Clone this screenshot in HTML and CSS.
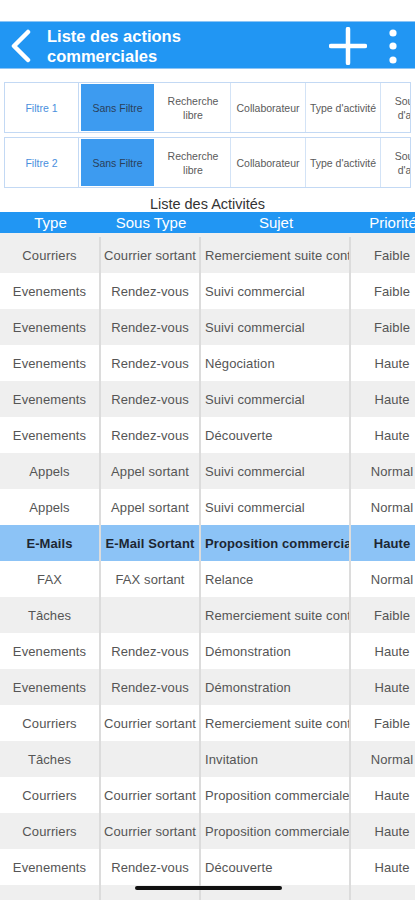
FILE: index.html
```html
<!DOCTYPE html>
<html lang="fr">
<head>
<meta charset="utf-8">
<link rel="stylesheet" href="styles.css">
</head>
<body>
<div class="status"></div>
<header class="appbar">
  <svg class="back" width="26" height="34" viewBox="0 0 26 34"><path d="M20 3 L6 17 L20 31" fill="none" stroke="#fff" stroke-width="4.5" stroke-linecap="round" stroke-linejoin="round"/></svg>
  <div class="title">Liste des actions<br>commerciales</div>
  <svg class="plus" width="38" height="38" viewBox="0 0 38 38"><path d="M19 2 V36 M2 19 H36" stroke="#fff" stroke-width="4.5" stroke-linecap="round"/></svg>
  <svg class="more" width="12" height="38" viewBox="0 0 12 38"><circle cx="6" cy="6" r="3.6" fill="#fff"/><circle cx="6" cy="19" r="3.6" fill="#fff"/><circle cx="6" cy="33" r="3.6" fill="#fff"/></svg>
</header>

<section class="filters">
  <div class="frow">
    <div class="fcell first">Filtre 1</div>
    <div class="fcell sel">Sans Filtre</div>
    <div class="fcell">Recherche<br>libre</div>
    <div class="fcell">Collaborateur</div>
    <div class="fcell">Type d'activité</div>
    <div class="fcell">Sous type<br>d'activité</div>
  </div>
  <div class="frow">
    <div class="fcell first">Filtre 2</div>
    <div class="fcell sel">Sans Filtre</div>
    <div class="fcell">Recherche<br>libre</div>
    <div class="fcell">Collaborateur</div>
    <div class="fcell">Type d'activité</div>
    <div class="fcell">Sous type<br>d'activité</div>
  </div>
</section>

<div class="ltitle">Liste des Activités</div>

<div class="table">
  <div class="row head"><div>Type</div><div>Sous Type</div><div>Sujet</div><div>Priorité</div></div>
  <div class="row g firstrow"><div>Courriers</div><div>Courrier sortant</div><div class="l">Remerciement suite contact</div><div>Faible</div></div>
  <div class="row"><div>Evenements</div><div>Rendez-vous</div><div class="l">Suivi commercial</div><div>Faible</div></div>
  <div class="row g"><div>Evenements</div><div>Rendez-vous</div><div class="l">Suivi commercial</div><div>Faible</div></div>
  <div class="row"><div>Evenements</div><div>Rendez-vous</div><div class="l">Négociation</div><div>Haute</div></div>
  <div class="row g"><div>Evenements</div><div>Rendez-vous</div><div class="l">Suivi commercial</div><div>Haute</div></div>
  <div class="row"><div>Evenements</div><div>Rendez-vous</div><div class="l">Découverte</div><div>Haute</div></div>
  <div class="row g"><div>Appels</div><div>Appel sortant</div><div class="l">Suivi commercial</div><div>Normal</div></div>
  <div class="row"><div>Appels</div><div>Appel sortant</div><div class="l">Suivi commercial</div><div>Normal</div></div>
  <div class="row hl"><div>E-Mails</div><div>E-Mail Sortant</div><div class="l">Proposition commerciale</div><div>Haute</div></div>
  <div class="row"><div>FAX</div><div>FAX sortant</div><div class="l">Relance</div><div>Normal</div></div>
  <div class="row g"><div>Tâches</div><div></div><div class="l">Remerciement suite contact</div><div>Faible</div></div>
  <div class="row"><div>Evenements</div><div>Rendez-vous</div><div class="l">Démonstration</div><div>Haute</div></div>
  <div class="row g"><div>Evenements</div><div>Rendez-vous</div><div class="l">Démonstration</div><div>Haute</div></div>
  <div class="row"><div>Courriers</div><div>Courrier sortant</div><div class="l">Remerciement suite contact</div><div>Faible</div></div>
  <div class="row g"><div>Tâches</div><div></div><div class="l">Invitation</div><div>Normal</div></div>
  <div class="row"><div>Courriers</div><div>Courrier sortant</div><div class="l">Proposition commerciale</div><div>Haute</div></div>
  <div class="row g"><div>Courriers</div><div>Courrier sortant</div><div class="l">Proposition commerciale</div><div>Haute</div></div>
  <div class="row"><div>Evenements</div><div>Rendez-vous</div><div class="l">Découverte</div><div>Haute</div></div>
  <div class="row g"><div></div><div></div><div class="l"></div><div></div></div>
</div>

<div class="homebar"></div>
</body>
</html>
```

FILE: styles.css
```css
html, body {
  margin: 0;
  padding: 0;
  width: 415px;
  height: 900px;
  overflow: hidden;
  background: #fff;
  font-family: "Liberation Sans", Arial, sans-serif;
}
body { position: relative; }

.status { height: 21px; background: #fff; }

.appbar {
  height: 48px;
  background: #2196f3;
  border-top: 1px solid #8cc4f5;
  border-bottom: 1px solid #8cc4f5;
  box-sizing: border-box;
  display: flex;
  align-items: center;
  padding-left: 8px;
}
.appbar .back { flex: none; margin-top: 1px; }
.appbar .title {
  color: #fff;
  font-weight: bold;
  font-size: 16.5px;
  line-height: 20px;
  margin-left: 13px;
  flex: 1;
  margin-top: 1px;
}
.appbar .plus { flex: none; margin-right: 20px; margin-top: 2px; }
.appbar .more { flex: none; margin-right: 16px; margin-top: 1px; }

.filters {
  padding: 13px 4px 0 4px;
  display: flex;
  flex-direction: column;
  gap: 4px;
}
.frow {
  height: 51px;
  border: 1px solid #c3d9f4;
  box-sizing: border-box;
  display: flex;
  overflow: hidden;
  width: 407px;
}
.fcell {
  flex: none;
  width: 75px;
  border-right: 1px solid #d3e3f6;
  box-sizing: border-box;
  display: flex;
  align-items: center;
  justify-content: center;
  text-align: center;
  font-size: 10.5px;
  line-height: 14px;
  color: #5a5a5a;
  white-space: nowrap;
  overflow: hidden;
}
.fcell.first {
  width: 74px;
  color: #4a8fdd;
  border-right: 1px solid #c3d9f4;
}
.fcell.sel {
  background: #3d9bf0;
  color: #2a3f5a;
  margin: 1px 2px 1px 2px;
  width: 73px;
  border-right: none;
}

.ltitle {
  text-align: center;
  font-size: 14.5px;
  line-height: 16px;
  color: #333;
  margin-top: 8px;
}

.table { width: 415px; overflow: hidden; }
.row {
  display: grid;
  grid-template-columns: 101px 100px 150px 84px;
  height: 36px;
  background: #fff;
  width: 435px;
}
.row > div {
  border-right: 2px solid #dcdcdc;
  display: flex;
  align-items: center;
  justify-content: center;
  font-size: 13px;
  color: #555;
  white-space: nowrap;
  overflow: hidden;
  letter-spacing: 0.1px;
}
.row > div.l { justify-content: flex-start; padding-left: 4px; }
.row.g { background: #efefef; }
.row.firstrow { height: 40px; padding-top: 4px; box-sizing: border-box; }
.row.head {
  background: #2196f3;
  height: 21px;
}
.row.head > div {
  color: #fff;
  font-size: 15px;
  border-right: none;
  letter-spacing: 0;
}
.row.hl { background: #8cc3f6; }
.row.hl > div { font-weight: bold; color: #1d2733; }

.homebar {
  position: absolute;
  left: 135px;
  top: 886px;
  width: 147px;
  height: 4px;
  border-radius: 2px;
  background: #111;
}
```
